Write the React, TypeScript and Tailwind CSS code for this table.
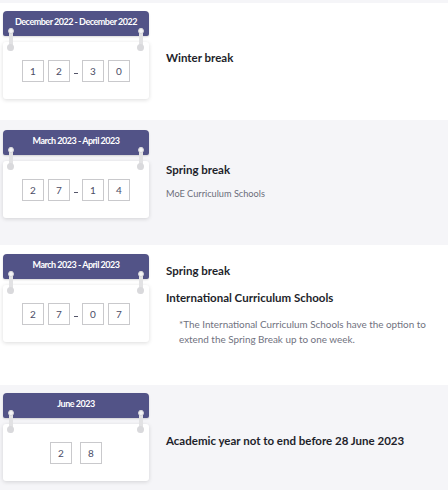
import React, { FC } from "react";

const Pin: FC<{ side: "left" | "right" }> = ({ side }) => (
  <div
    className={`absolute top-[17px] w-[7px] h-[23px] flex flex-col items-center ${
      side === "left" ? "left-[4px]" : "right-[5px]"
    }`}
  >
    <div className="relative w-[4px] h-full rounded-full bg-[#e2e2e4]">
      <div className="absolute -left-[1px] top-0 w-[6px] h-[6px] rounded-full bg-[#f4f4f6] border border-[#d4d4d8]" />
      <div className="absolute -left-[1.5px] bottom-0 w-[7px] h-[7px] rounded-full bg-[#d9d9dc]" />
    </div>
  </div>
);

const Box: FC<{ d: string }> = ({ d }) => (
  <div className="w-[22px] h-[22px] border border-[#c9c9cc] flex items-start justify-center pt-[3px] text-[10px] leading-[14px] text-[#4a4c66]">
    {d}
  </div>
);

const CalendarCard: FC<{ range: string; digits: string[] }> = ({ range, digits }) => (
  <div className="relative w-[146px] shrink-0">
    <div className="h-[25px] rounded-t-[4px] rounded-b-[2px] bg-[#525387] text-white font-bold text-[9px] tracking-[-0.5px] leading-[20px] pt-[1px] text-center shadow-[0_1px_2px_rgba(0,0,0,0.15)]">
      {range}
    </div>
    <div className="mt-[6px] h-[57px] bg-white rounded-[3px] shadow-[0_1px_4px_rgba(0,0,0,0.14)] flex items-start justify-center pt-[18px]">
      {digits.length === 4 ? (
        <div className="flex items-start">
          <div className="flex gap-[4px]">
            <Box d={digits[0]} />
            <Box d={digits[1]} />
          </div>
          <div className="w-[12px] flex justify-center pt-[13px]">
            <div className="w-[4px] h-[1px] bg-[#55566a]" />
          </div>
          <div className="flex gap-[4px]">
            <Box d={digits[2]} />
            <Box d={digits[3]} />
          </div>
        </div>
      ) : (
        <div className="flex gap-[8px]">
          {digits.map((d, i) => (
            <Box key={i} d={d} />
          ))}
        </div>
      )}
    </div>
    <Pin side="left" />
    <Pin side="right" />
  </div>
);

const App: FC = () => {
  return (
    <div className="w-[448px] h-[490px] overflow-hidden bg-white font-['Lato','Open_Sans',sans-serif]">
      <div className="h-[3px] bg-[#f5f5f8]" />

      <div className="h-[117px] bg-white flex pl-[3px]">
        <div className="pt-[8px]">
          <CalendarCard range="December 2022 - December 2022" digits={["1", "2", "3", "0"]} />
        </div>
        <div className="pl-[17px] pt-[47px]">
          <p className="text-[11.5px] leading-[16px] font-bold text-[#1e1f2b]">Winter break</p>
        </div>
      </div>

      <div className="h-[125px] bg-[#f5f5f8] flex pl-[3px]">
        <div className="pt-[10px]">
          <CalendarCard range="March 2023 - April 2023" digits={["2", "7", "1", "4"]} />
        </div>
        <div className="pl-[17px] pt-[42px]">
          <p className="text-[11.5px] leading-[16px] font-bold text-[#1e1f2b]">Spring break</p>
          <p className="mt-[10px] text-[9.2px] leading-[12px] text-[#6b6d7a]">MoE Curriculum Schools</p>
        </div>
      </div>

      <div className="h-[140px] bg-white flex pl-[3px]">
        <div className="pt-[9px]">
          <CalendarCard range="March 2023 - April 2023" digits={["2", "7", "0", "7"]} />
        </div>
        <div className="pl-[17px] pt-[18px]">
          <p className="text-[11.5px] leading-[16px] font-bold text-[#1e1f2b]">Spring break</p>
          <p className="mt-[11px] text-[11.5px] leading-[16px] font-bold text-[#1e1f2b]">
            International Curriculum Schools
          </p>
          <p className="mt-[11px] pl-[13px] w-[275px] text-[9.9px] leading-[15px] text-[#707280]">
            *The International Curriculum Schools have the option to extend the Spring Break up to one week.
          </p>
        </div>
      </div>

      <div className="h-[105px] bg-[#f5f5f8] flex pl-[3px]">
        <div className="pt-[8px]">
          <CalendarCard range="June 2023" digits={["2", "8"]} />
        </div>
        <div className="pl-[17px] pt-[48px]">
          <p className="text-[11.5px] leading-[16px] font-bold text-[#1e1f2b]">
            Academic year not to end before 28 June 2023
          </p>
        </div>
      </div>
    </div>
  );
};

export default App;
